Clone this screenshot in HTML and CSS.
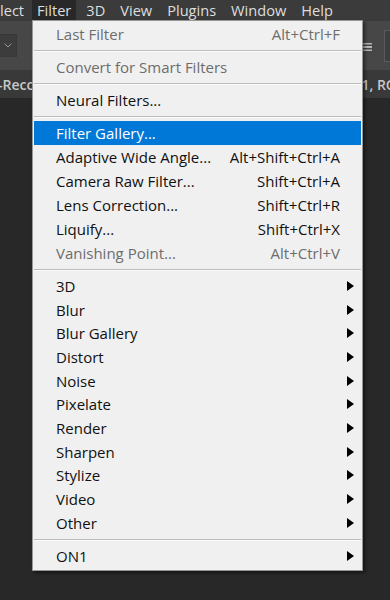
FILE: index.html
```html
<!DOCTYPE html>
<html>
<head>
<meta charset="utf-8">
<link rel="stylesheet" href="styles.css">
</head>
<body>
<div class="app">
  <div class="menubar">
    <span class="mb-item first">lect</span>
    <span class="mb-item active">Filter</span>
    <span class="mb-item">3D</span>
    <span class="mb-item">View</span>
    <span class="mb-item">Plugins</span>
    <span class="mb-item">Window</span>
    <span class="mb-item">Help</span>
  </div>
  <div class="toolbar">
    <div class="dropdown"><svg width="8" height="5" viewBox="0 0 8 5"><path d="M0.5 0.5 L4 4 L7.5 0.5" fill="none" stroke="#9a9a9a" stroke-width="1"/></svg></div>
    <div class="tool-right">
      <svg class="align-icon" width="12" height="8" viewBox="0 0 12 8"><rect x="0" y="0" width="12" height="1.5" fill="#b5b5b5"/><rect x="2" y="3" width="10" height="2" fill="#b5b5b5"/><rect x="0" y="6.5" width="12" height="1.5" fill="#b5b5b5"/></svg>
      <div class="tool-box"></div>
    </div>
  </div>
  <div class="tabbar">
    <span class="tab-left">-Reco</span>
    <span class="tab-right">1, RG</span>
  </div>
  <div class="canvas"></div>

  <div class="menu">
    <div class="row disabled"><span class="label">Last Filter</span><span class="key">Alt+Ctrl+F</span><span class="sub"></span></div>
    <div class="sep"></div>
    <div class="row disabled"><span class="label">Convert for Smart Filters</span><span class="key"></span><span class="sub"></span></div>
    <div class="sep"></div>
    <div class="row"><span class="label">Neural Filters...</span><span class="key"></span><span class="sub"></span></div>
    <div class="sep"></div>
    <div class="row selected"><span class="label">Filter Gallery...</span><span class="key"></span><span class="sub"></span></div>
    <div class="row"><span class="label">Adaptive Wide Angle...</span><span class="key">Alt+Shift+Ctrl+A</span><span class="sub"></span></div>
    <div class="row"><span class="label">Camera Raw Filter...</span><span class="key">Shift+Ctrl+A</span><span class="sub"></span></div>
    <div class="row"><span class="label">Lens Correction...</span><span class="key">Shift+Ctrl+R</span><span class="sub"></span></div>
    <div class="row"><span class="label">Liquify...</span><span class="key">Shift+Ctrl+X</span><span class="sub"></span></div>
    <div class="row disabled"><span class="label">Vanishing Point...</span><span class="key">Alt+Ctrl+V</span><span class="sub"></span></div>
    <div class="sep"></div>
    <div class="row tight"><span class="label">3D</span><span class="key"></span><span class="sub"><i class="arrow"></i></span></div>
    <div class="row tight"><span class="label">Blur</span><span class="key"></span><span class="sub"><i class="arrow"></i></span></div>
    <div class="row tight"><span class="label">Blur Gallery</span><span class="key"></span><span class="sub"><i class="arrow"></i></span></div>
    <div class="row tight"><span class="label">Distort</span><span class="key"></span><span class="sub"><i class="arrow"></i></span></div>
    <div class="row tight"><span class="label">Noise</span><span class="key"></span><span class="sub"><i class="arrow"></i></span></div>
    <div class="row tight"><span class="label">Pixelate</span><span class="key"></span><span class="sub"><i class="arrow"></i></span></div>
    <div class="row tight"><span class="label">Render</span><span class="key"></span><span class="sub"><i class="arrow"></i></span></div>
    <div class="row tight"><span class="label">Sharpen</span><span class="key"></span><span class="sub"><i class="arrow"></i></span></div>
    <div class="row tight"><span class="label">Stylize</span><span class="key"></span><span class="sub"><i class="arrow"></i></span></div>
    <div class="row tight"><span class="label">Video</span><span class="key"></span><span class="sub"><i class="arrow"></i></span></div>
    <div class="row tight"><span class="label">Other</span><span class="key"></span><span class="sub"><i class="arrow"></i></span></div>
    <div class="sep"></div>
    <div class="row"><span class="label">ON1</span><span class="key"></span><span class="sub"><i class="arrow"></i></span></div>
  </div>
</div>
</body>
</html>
```

FILE: styles.css
```css
* { box-sizing: border-box; }
html, body { margin: 0; padding: 0; }
body {
  width: 390px;
  height: 600px;
  overflow: hidden;
  background: #282828;
  font-family: "Open Sans", "Noto Sans", sans-serif;
}
.app {
  position: relative;
  width: 390px;
  height: 600px;
  display: flex;
  flex-direction: column;
}
.menubar {
  height: 21px;
  background: #3b3b3b;
  display: flex;
  align-items: stretch;
  gap: 5px;
  color: #dedede;
  font-size: 14.6px;
  line-height: 21px;
}
.mb-item { padding: 0 5px; }
.mb-item.first { margin-left: -5px; margin-right: -2px; }
.mb-item.active { background: #282828; }
.toolbar {
  height: 49px;
  background: #474747;
  display: flex;
  align-items: center;
  justify-content: space-between;
}
.dropdown {
  width: 18px;
  height: 23px;
  margin-left: -1px;
  margin-top: -1px;
  background: #3c3c3c;
  border: 1px solid #383838;
  display: flex;
  align-items: center;
  justify-content: flex-end;
  padding-right: 4px;
}
.tool-right {
  display: flex;
  align-items: center;
  gap: 12px;
}
.align-icon { margin-top: 2px; }
.tool-box {
  width: 6px;
  height: 32px;
  border: 1px solid #5a5a5a;
  border-right: none;
  background: #3e3e3e;
}
.tabbar {
  height: 28px;
  background: #393939;
  display: flex;
  align-items: center;
  justify-content: space-between;
  color: #c8c8c8;
  font-size: 14px;
  font-weight: 600;
  overflow: hidden;
}
.tab-left { margin-left: -2px; }
.tab-right { margin-right: -6px; }
.canvas { flex: 1; background: #282828; }

.menu {
  position: absolute;
  left: 32px;
  top: 20px;
  width: 331px;
  background: #f0f0f0;
  border: 1px solid #979797;
  padding: 1px 1px 2px;
  box-shadow: 2px 2px 3px rgba(0,0,0,0.45);
  font-size: 15px;
  color: #111;
}
.row {
  height: 24px;
  display: grid;
  grid-template-columns: 1fr auto 21px;
  align-items: center;
  padding-left: 22px;
}
.row.tight { height: 23.7px; }
.row .key { text-align: right; }
.row.disabled { color: #6d6d6d; }
.row.selected { background: #0078d7; color: #fff; }
.sub { display: flex; justify-content: flex-end; padding-right: 7px; }
.arrow {
  display: block;
  width: 0;
  height: 0;
  border-top: 5.5px solid transparent;
  border-bottom: 5.5px solid transparent;
  border-left: 7px solid #000;
}
.sep {
  height: 9px;
  display: flex;
  align-items: center;
}
.sep::before {
  content: "";
  display: block;
  width: 100%;
  height: 1px;
  background: #bdbdbd;
  box-shadow: 0 1px 0 #fafafa;
}
```
